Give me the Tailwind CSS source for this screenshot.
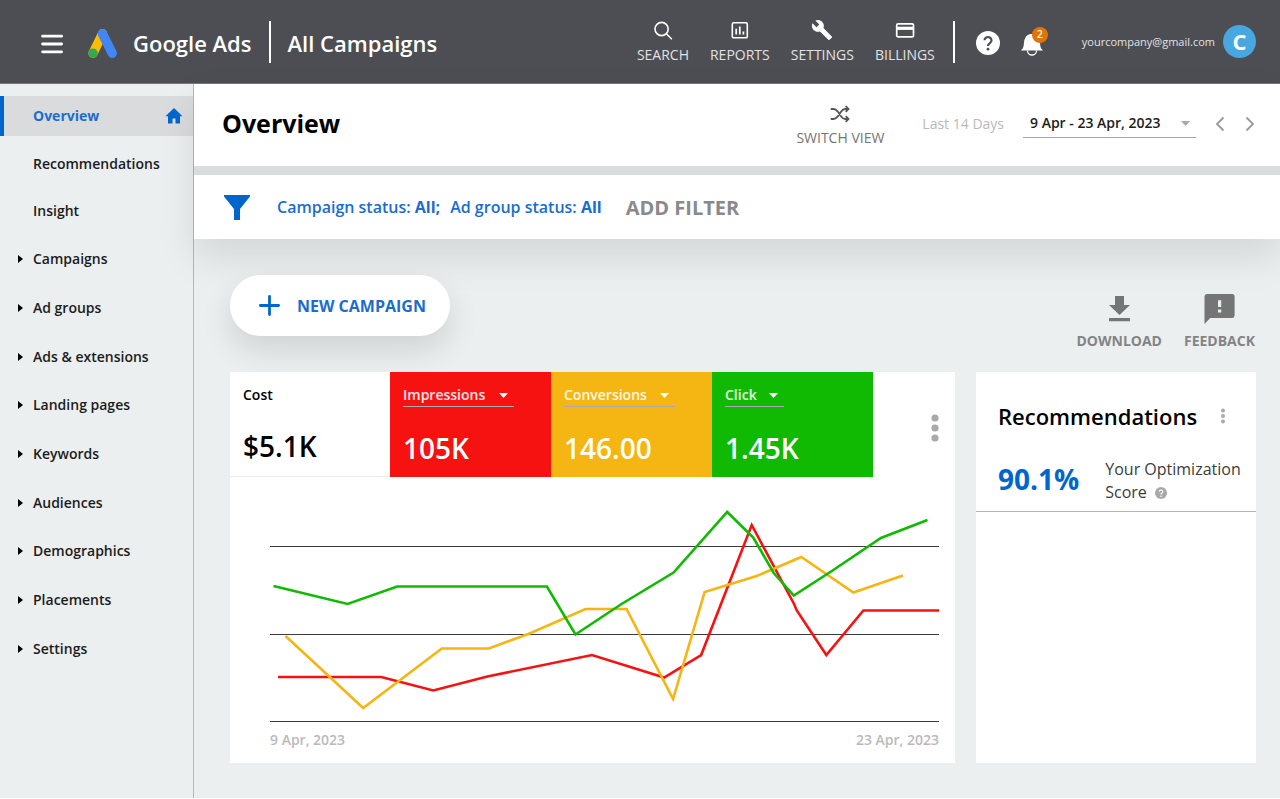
<!DOCTYPE html>
<html lang="en">
<head>
<meta charset="utf-8">
<meta name="viewport" content="width=device-width, initial-scale=1">
<title>Google Ads – All Campaigns</title>
<script src="https://cdn.jsdelivr.net/npm/@tailwindcss/browser@4"></script>
</head>
<body class="flex min-h-screen flex-col bg-white pb-px font-['Open_Sans','Noto_Sans',sans-serif] text-sm text-[#1c1c1c]">

<header class="flex h-[84px] shrink-0 items-center border-b border-[#75777a] bg-[#4c4e53] pr-6 pl-10 text-white">
  <button type="button" aria-label="Menu" class="mt-1 shrink-0">
    <svg class="size-6" viewBox="0 0 24 24" fill="none" stroke="currentColor" stroke-width="2.8" stroke-linecap="round"><path d="M2.6 4.2h19M2.6 12h19M2.6 19.8h19"/></svg>
  </button>
  <a href="#" class="mt-1 ml-6 flex items-center gap-4">
    <svg class="size-[29px]" viewBox="0 0 29 29" fill="none" stroke-linecap="round">
      <path d="M14.5 4.8 5 24.2" stroke="#fbbc04" stroke-width="9.4"/>
      <path d="M14.5 4.8 24.2 24.2" stroke="#4285f4" stroke-width="9.4"/>
      <circle cx="4.9" cy="24.2" r="4.8" fill="#34a853"/>
    </svg>
    <span class="text-[22px] font-semibold whitespace-nowrap">Google Ads</span>
  </a>
  <div class="mx-[17px] h-[42px] w-0.5 bg-white"></div>
  <span class="mt-1 text-[22px] font-semibold whitespace-nowrap">All Campaigns</span>

  <nav class="ml-auto flex items-center gap-[21px] text-white">
    <a href="#" class="flex flex-col items-center gap-1">
      <svg class="size-[22px]" viewBox="0 0 22 22" fill="none" stroke="currentColor" stroke-width="1.6" stroke-linecap="round"><circle cx="9.6" cy="10" r="6.6"/><path d="m14.6 15 4.800 4.800"/></svg>
      <span class="leading-5 text-[#e2e2e2]">SEARCH</span>
    </a>
    <a href="#" class="flex flex-col items-center gap-1">
      <svg class="size-[22px]" viewBox="0 0 22 22" fill="none" stroke="currentColor"><rect x="3.3" y="3.8" width="15" height="15" rx="1.4" stroke-width="1.6"/><path d="M7.2 9.7V15.500M10.800 7.500v8M14.400 12.500v3" stroke-width="1.700"/></svg>
      <span class="leading-5 text-[#e2e2e2]">REPORTS</span>
    </a>
    <a href="#" class="flex flex-col items-center gap-1">
      <svg class="size-[22px]" viewBox="0 0 24 24" fill="currentColor"><path d="M22.7 19l-9.1-9.1c.9-2.3.4-5-1.5-6.9-2-2-5-2.4-7.4-1.3L9 6 6 9 1.600 4.700C.4 7.100.9 10.100 2.900 12.100c1.900 1.900 4.600 2.400 6.900 1.500l9.100 9.100c.4.4 1 .4 1.400 0l2.300-2.300c.5-.4.5-1.100.1-1.400z"/></svg>
      <span class="leading-5 text-[#e2e2e2]">SETTINGS</span>
    </a>
    <a href="#" class="flex flex-col items-center gap-1">
      <svg class="size-[22px]" viewBox="0 0 22 22" fill="none" stroke="currentColor"><rect x="2.700" y="4.800" width="16.800" height="13" rx="1.400" stroke-width="1.700"/><path d="M2.700 9.300h16.800" stroke-width="3.200"/></svg>
      <span class="leading-5 text-[#e2e2e2]">BILLINGS</span>
    </a>
  </nav>
  <div class="mr-[21px] ml-[18px] h-[42px] w-0.5 bg-white"></div>
  <button type="button" aria-label="Help" class="mt-0.5 shrink-0">
    <svg class="size-6" viewBox="0 0 24 24" fill="none"><circle cx="12" cy="12" r="12" fill="#fff"/><path d="M8.500 9.300a3.500 3.300 0 1 1 5.400 2.800c-1.100.8-1.900 1.400-1.900 2.900" stroke="#4c4e53" stroke-width="2.200"/><circle cx="12" cy="18.200" r="1.400" fill="#4c4e53"/></svg>
  </button>
  <button type="button" aria-label="Notifications" class="relative mt-1 ml-5 shrink-0">
    <svg class="size-6" viewBox="0 0 24 24"><path d="M1 18.500C4.500 15.500 3.500 12 4.300 8.500 5.200 4.700 7.500 2 12 2s6.800 2.700 7.700 6.500c.8 3.500-.2 7 3.300 10z" fill="#fff"/><path d="M7.500 18.500a4.500 4.500 0 0 0 9 0" fill="none" stroke="#fff" stroke-width="1.300"/></svg>
    <span class="absolute -top-[5px] left-3 flex size-4 items-center justify-center rounded-full bg-[#e37400] text-[10px] font-semibold">2</span>
  </button>
  <span class="ml-[38px] text-[11px] text-[#e2e2e2]">yourcompany@gmail.com</span>
  <button type="button" aria-label="Account" class="ml-2 flex size-[33px] shrink-0 items-center justify-center rounded-full bg-[#48a7e0] pb-0.5 text-[22px] leading-none font-bold">C</button>
</header>

<div class="flex flex-1">
  <aside class="w-[194px] shrink-0 border-r border-[#b4b7b8] bg-[#ebeff0] pt-3 font-semibold">
    <nav>
      <a href="#" class="flex h-10 items-center justify-between border-l-4 border-[#0066cc] bg-[#dadbdd] pr-2.5 pl-[29px] font-bold text-[#1a6dcf]">
        Overview
        <svg class="size-[18px]" viewBox="0 0 18 18" fill="#0066cc"><path d="M9 1 .5 9.200H3V16.500h4.500v-5h3v5H15V9.200h2.500z"/></svg>
      </a>
      <a href="#" class="mt-1 flex h-[47px] items-center pl-[33px]">Recommendations</a>
      <a href="#" class="flex h-[47px] items-center pl-[33px]">Insight</a>
      <div class="mt-px flex h-[438px] flex-col">
        <a href="#" class="flex flex-1 items-center gap-2.5 pl-[18px]"><svg class="h-2 w-[5px]" viewBox="0 0 5 8"><path d="M0 0l5 4-5 4z"/></svg>Campaigns</a>
        <a href="#" class="flex flex-1 items-center gap-2.5 pl-[18px]"><svg class="h-2 w-[5px]" viewBox="0 0 5 8"><path d="M0 0l5 4-5 4z"/></svg>Ad groups</a>
        <a href="#" class="flex flex-1 items-center gap-2.5 pl-[18px]"><svg class="h-2 w-[5px]" viewBox="0 0 5 8"><path d="M0 0l5 4-5 4z"/></svg>Ads &amp; extensions</a>
        <a href="#" class="flex flex-1 items-center gap-2.5 pl-[18px]"><svg class="h-2 w-[5px]" viewBox="0 0 5 8"><path d="M0 0l5 4-5 4z"/></svg>Landing pages</a>
        <a href="#" class="flex flex-1 items-center gap-2.5 pl-[18px]"><svg class="h-2 w-[5px]" viewBox="0 0 5 8"><path d="M0 0l5 4-5 4z"/></svg>Keywords</a>
        <a href="#" class="flex flex-1 items-center gap-2.5 pl-[18px]"><svg class="h-2 w-[5px]" viewBox="0 0 5 8"><path d="M0 0l5 4-5 4z"/></svg>Audiences</a>
        <a href="#" class="flex flex-1 items-center gap-2.5 pl-[18px]"><svg class="h-2 w-[5px]" viewBox="0 0 5 8"><path d="M0 0l5 4-5 4z"/></svg>Demographics</a>
        <a href="#" class="flex flex-1 items-center gap-2.5 pl-[18px]"><svg class="h-2 w-[5px]" viewBox="0 0 5 8"><path d="M0 0l5 4-5 4z"/></svg>Placements</a>
        <a href="#" class="flex flex-1 items-center gap-2.5 pl-[18px]"><svg class="h-2 w-[5px]" viewBox="0 0 5 8"><path d="M0 0l5 4-5 4z"/></svg>Settings</a>
      </div>
    </nav>
  </aside>

  <main class="flex min-w-0 flex-1 flex-col bg-[#ebeff0]">
    <div class="flex shrink-0 flex-col gap-[9px] bg-[#d8dcdd] shadow-[0_18px_36px_rgba(0,0,0,0.1)]">
    <div class="flex h-[82px] shrink-0 items-center bg-white pr-6 pb-[3px] pl-7">
      <h1 class="text-[25px] font-bold text-black">Overview</h1>
      <button type="button" class="ml-auto flex flex-col items-center gap-1 pt-1 text-[#757575]">
        <svg class="size-5" viewBox="0 0 20 20" fill="none" stroke="#555" stroke-width="1.800"><path d="M.8 5h2.700c2 0 3.200 1.200 4.300 2.600l3.400 4.800C12.200 13.800 13.400 15 15.200 15H18M.8 15h2.700c2 0 3.200-1.200 4.300-2.600l3.400-4.800C12.200 6.200 13.400 5 15.200 5H18M15.700 2.200 18.500 5l-2.800 2.800M15.700 12.200l2.800 2.800-2.800 2.800"/></svg>
        <span class="leading-5">SWITCH VIEW</span>
      </button>
      <span class="ml-[38px] text-[#b9b9b9]">Last 14 Days</span>
      <div class="relative ml-[19px] border-b border-[#a5a5a5]">
        <select aria-label="Date range" class="block h-7 w-[173px] appearance-none bg-transparent pl-[7px] font-semibold"><option>9 Apr - 23 Apr, 2023</option></select>
        <svg class="pointer-events-none absolute top-3 right-1.5 h-[5px] w-[9px]" viewBox="0 0 9 5"><path d="M0 0h9L4.500 5z" fill="#aaa"/></svg>
      </div>
      <button type="button" aria-label="Previous period" class="ml-[18px]"><svg class="h-4 w-3" viewBox="0 0 12 16" fill="none" stroke="#999" stroke-width="1.800"><path d="M9.500 1.500 3 8l6.500 6.500"/></svg></button>
      <button type="button" aria-label="Next period" class="ml-[18px]"><svg class="h-4 w-3" viewBox="0 0 12 16" fill="none" stroke="#999" stroke-width="1.800"><path d="M2.500 1.500 9 8l-6.500 6.500"/></svg></button>
    </div>

    <div class="flex h-16 shrink-0 items-center bg-white pl-[30px] text-base text-[#1a6dcf]">
      <svg class="h-[25px] w-[26px] shrink-0" viewBox="0 0 26 25" fill="#0066cc"><path d="M0 0h26v1.500L16 14v11h-6V14L0 1.500z"/></svg>
      <p class="ml-[27px] flex gap-2.5 font-semibold"><span>Campaign status: <b class="font-bold">All;</b></span><span>Ad group status: <b class="font-bold">All</b></span></p>
      <button type="button" class="ml-6 pt-0.5 text-xl font-bold text-[#8a8a8a]">ADD FILTER</button>
    </div>
    </div>

    <div class="flex flex-1 flex-col px-9 pr-6 pb-[35px]">
      <div class="flex justify-between pt-9">
        <button type="button" class="flex h-[61px] w-[220px] items-center rounded-full bg-white pl-[29px] text-base font-bold text-[#1a6dcf] shadow-[0_14px_32px_rgba(0,0,0,0.12)]">
          <svg class="mr-[17px] size-[21px]" viewBox="0 0 21 21" fill="none" stroke="#0066cc" stroke-width="2.800" stroke-linecap="round"><path d="M10.500 1.400v18.200M1.400 10.500h18.200"/></svg>
          NEW CAMPAIGN
        </button>
        <div class="mt-[18px] mr-px flex gap-[22px] self-start font-bold text-[#848484]">
          <button type="button" class="flex flex-col items-center gap-1.5">
            <svg class="h-8 w-[31px]" viewBox="0 0 31 32" fill="#757575"><path d="M11 3h9v9h6L15.500 22 5 12h6zM5 25h21v3.200H5z"/></svg>
            <span class="leading-5">DOWNLOAD</span>
          </button>
          <button type="button" class="flex flex-col items-center gap-1.5">
            <svg class="h-8 w-[31px]" viewBox="0 0 31 32" fill="#757575"><path d="M3 1h25a2.600 2.600 0 0 1 2.600 2.600V22.500A2.600 2.600 0 0 1 28 25H6.200L.5 31V3.600A2.600 2.600 0 0 1 3 1z"/><path d="M14 7.200h3.200v6.800H14zM14 16.400h3.200v3H14z" fill="#ebeff0"/></svg>
            <span class="leading-5">FEEDBACK</span>
          </button>
        </div>
      </div>

      <div class="mt-[21px] flex flex-1 gap-[21px]">
        <section class="flex min-w-0 flex-1 flex-col bg-white" aria-label="Performance">
          <div class="flex h-[105px]">
            <div class="w-[160px] border-b border-[#ececec] px-[13px] pt-3 text-black">
              <div class="font-semibold leading-[22px]">Cost</div>
              <div class="mt-[22px] text-[28px] leading-9 font-semibold">$5.1K</div>
            </div>
            <div class="w-[161px] bg-[#f71212] px-[13px] pt-3 text-white">
              <div class="relative h-[23px] w-[111px] border-b border-[#aaa]">
                <select aria-label="Metric 1" class="block w-full appearance-none bg-transparent leading-[22px] font-semibold text-white/90"><option>Impressions</option></select>
                <svg class="pointer-events-none absolute top-[9px] right-1.5 h-[5px] w-[9px]" viewBox="0 0 9 5"><path d="M0 0h9L4.500 5z" fill="#fff"/></svg>
              </div>
              <div class="mt-[23px] text-[28px] leading-9 font-semibold">105K</div>
            </div>
            <div class="w-[161px] bg-[#f5b512] px-[13px] pt-3 text-white">
              <div class="relative h-[23px] w-[111px] border-b border-[#aaa]">
                <select aria-label="Metric 2" class="block w-full appearance-none bg-transparent leading-[22px] font-semibold text-white/90"><option>Conversions</option></select>
                <svg class="pointer-events-none absolute top-[9px] right-1.5 h-[5px] w-[9px]" viewBox="0 0 9 5"><path d="M0 0h9L4.500 5z" fill="#fff"/></svg>
              </div>
              <div class="mt-[23px] text-[28px] leading-9 font-semibold">146.00</div>
            </div>
            <div class="w-[161px] bg-[#10ba02] px-[13px] pt-3 text-white">
              <div class="relative h-[23px] w-[59px] border-b border-[#aaa]">
                <select aria-label="Metric 3" class="block w-full appearance-none bg-transparent leading-[22px] font-semibold text-white/90"><option>Click</option></select>
                <svg class="pointer-events-none absolute top-[9px] right-1.5 h-[5px] w-[9px]" viewBox="0 0 9 5"><path d="M0 0h9L4.500 5z" fill="#fff"/></svg>
              </div>
              <div class="mt-[23px] text-[28px] leading-9 font-semibold">1.45K</div>
            </div>
            <button type="button" aria-label="More chart options" class="mt-[42px] mr-4 ml-auto self-start"><svg class="h-7 w-2" viewBox="0 0 8 28" fill="#a9a9a9"><circle cx="4" cy="4" r="3.600"/><circle cx="4" cy="14" r="3.600"/><circle cx="4" cy="24" r="3.600"/></svg></button>
          </div>
          <div class="flex flex-1 flex-col pt-[23px] pr-4 pl-10">
            <!-- Daily trend: viewBox origin is the left end of the gridlines -->
            <svg class="h-[230px] w-full shrink-0 overflow-visible" viewBox="0 0 668 230" preserveAspectRatio="none" fill="none" stroke-width="2.600">
              <path d="M0 46.500h668M0 134.500h668M0 221.500h668" stroke="#3c3c3c" stroke-width="1"/>
              <path d="M8 177h103l52 13.500 54-14 104.500-21.500 72 22.500 37-22.500L481 25l42 78.500 3 7L555.500 155l37-44.500H668" stroke="#f71212"/>
              <path d="M15.500 136 93 208l78.500-59.500h47L258 134l57-25h41l46.500 90L434 92l52-16 44.500-19 52 35.500 49.500-17" stroke="#f5b512"/>
              <path d="M3.500 86 77.500 104 127 86.500h149.500L305 134.500l46-30.500 52-31.500L456.500 12l26 25.500L503 73l20 22.500L561 71l49-33 46.500-18" stroke="#10ba02"/>
            </svg>
            <div class="flex justify-between leading-5 font-semibold text-[#bababa]"><span>9 Apr, 2023</span><span>23 Apr, 2023</span></div>
          </div>
        </section>

        <section class="w-[280px] shrink-0 bg-white" aria-labelledby="rec">
          <div class="border-b border-[#b5b5b5] pt-7 pb-[7px] pl-[22px]">
            <div class="flex items-center justify-between pr-[29px]">
              <h2 id="rec" class="text-[22px] leading-8 font-semibold text-black">Recommendations</h2>
              <button type="button" aria-label="More options"><svg class="h-4 w-2" viewBox="0 0 8 16" fill="#a9a9a9"><circle cx="4" cy="2.500" r="2"/><circle cx="4" cy="8" r="2"/><circle cx="4" cy="13.500" r="2"/></svg></button>
            </div>
            <div class="mt-[26px] flex items-center gap-[26px]">
              <span class="pb-1 text-[28px] leading-9 font-bold text-[#0066cc]">90.1%</span>
              <p class="text-base leading-[23px] text-[#3c3c3c]">Your Optimization<br><span class="flex items-center gap-2">Score <svg class="size-3" viewBox="0 0 12 12" fill="none"><circle cx="6" cy="6" r="6" fill="#a9a9a9"/><path d="M4.300 4.600a1.700 1.600 0 1 1 2.700 1.400c-.6.4-1 .8-1 1.500" stroke="#fff" stroke-width="1.200"/><circle cx="6" cy="9.200" r=".8" fill="#fff"/></svg></span></p>
            </div>
          </div>
        </section>
      </div>
    </div>
  </main>
</div>
</body>
</html>
